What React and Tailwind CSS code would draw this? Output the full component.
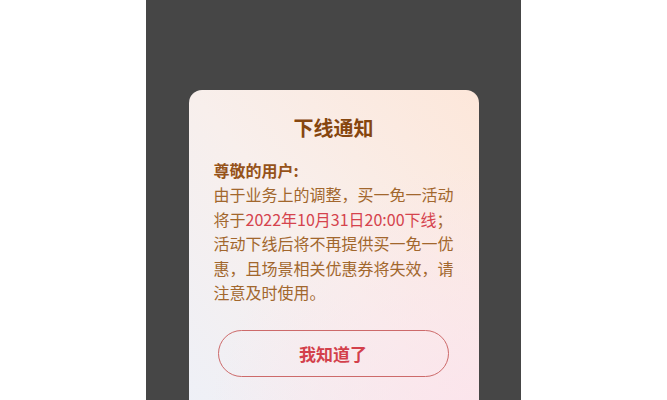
export default function App() {
  return (
    <div className="w-[667px] h-[400px] bg-white flex justify-center overflow-hidden" style={{ fontFamily: '"Noto Sans CJK SC", "Noto Sans", sans-serif' }}>
      <div className="w-[375px] h-[400px] bg-[#464646] flex flex-col items-center pt-[90px] overflow-hidden">
        {/* Notice modal */}
        <div className="relative w-[290px] shrink-0 rounded-t-[13px] overflow-hidden bg-linear-to-bl from-[#fde7da] via-[#f8efec] to-[#edf0f8] pb-[60px]">
          <div className="absolute inset-0 bg-[radial-gradient(circle_at_100%_100%,rgba(252,226,236,0.9),rgba(252,226,236,0)_60%)]" />
          <div className="relative">
            <h2 className="text-center text-[20px] leading-[28px] font-bold text-[#86460f] pt-[24px]">下线通知</h2>
            <div className="mt-[16px] px-[25px] text-[16px] leading-[24.4px] text-[#a2672d] whitespace-nowrap">
              <p className="font-bold text-[#96531a]">尊敬的用户:</p>
              <p>由于业务上的调整，买一免一活动</p>
              <p>
                将于<span className="text-[#d5434d]">2022年10月31日20:00下线</span>；
              </p>
              <p>活动下线后将不再提供买一免一优</p>
              <p>惠，且场景相关优惠券将失效，请</p>
              <p>注意及时使用。</p>
            </div>
            <div className="mt-[26px] pl-[29px] pr-[30px]">
              <button className="w-full h-[47px] rounded-full border-[1.5px] border-[#cd6a6a] flex items-center justify-center text-[17px] font-bold text-[#d3404b]">
                我知道了
              </button>
            </div>
          </div>
        </div>
      </div>
    </div>
  );
}
